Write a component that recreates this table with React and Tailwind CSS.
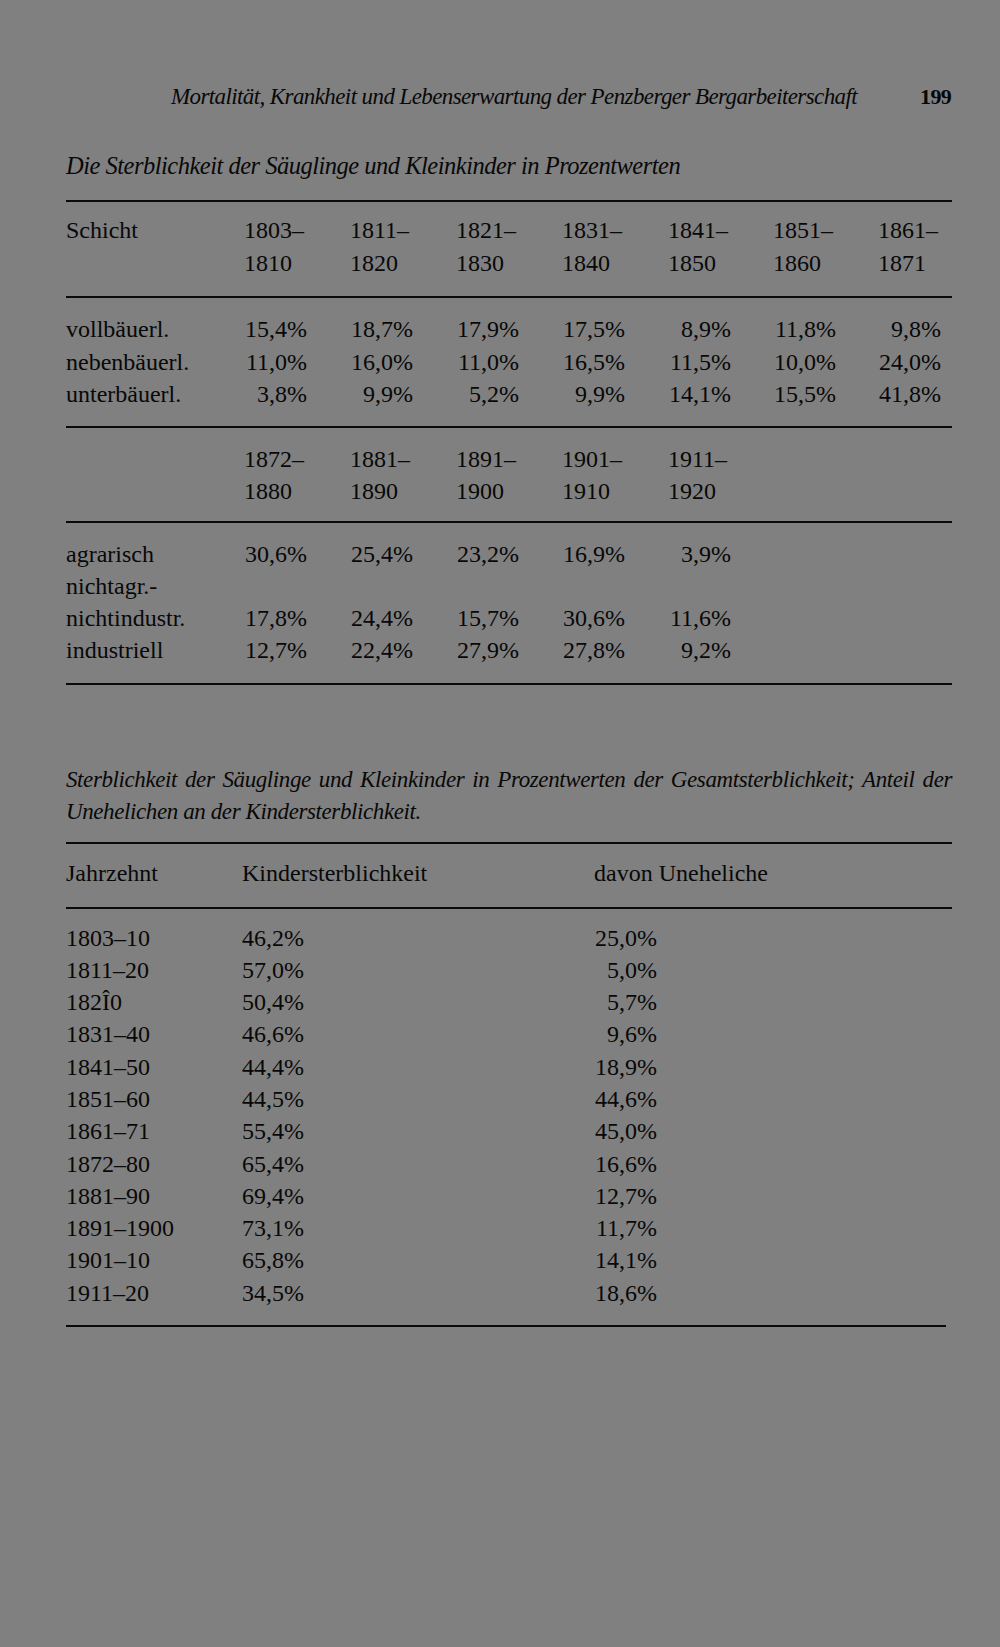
import React from "react";

const serif = { fontFamily: '"Liberation Serif", "DejaVu Serif", serif' };

const periods1 = [
  ["1803–", "1810"],
  ["1811–", "1820"],
  ["1821–", "1830"],
  ["1831–", "1840"],
  ["1841–", "1850"],
  ["1851–", "1860"],
  ["1861–", "1871"],
];

const rows1 = [
  ["vollbäuerl.", ["15,4%", "18,7%", "17,9%", "17,5%", "8,9%", "11,8%", "9,8%"]],
  ["nebenbäuerl.", ["11,0%", "16,0%", "11,0%", "16,5%", "11,5%", "10,0%", "24,0%"]],
  ["unterbäuerl.", ["3,8%", "9,9%", "5,2%", "9,9%", "14,1%", "15,5%", "41,8%"]],
];

const periods2 = [
  ["1872–", "1880"],
  ["1881–", "1890"],
  ["1891–", "1900"],
  ["1901–", "1910"],
  ["1911–", "1920"],
];

const rows2 = [
  ["agrarisch", ["30,6%", "25,4%", "23,2%", "16,9%", "3,9%"]],
  ["nichtagr.-", []],
  ["nichtindustr.", ["17,8%", "24,4%", "15,7%", "30,6%", "11,6%"]],
  ["industriell", ["12,7%", "22,4%", "27,9%", "27,8%", "9,2%"]],
];

const rows3 = [
  ["1803–10", "46,2%", "25,0%"],
  ["1811–20", "57,0%", "5,0%"],
  ["182Î0", "50,4%", "5,7%"],
  ["1831–40", "46,6%", "9,6%"],
  ["1841–50", "44,4%", "18,9%"],
  ["1851–60", "44,5%", "44,6%"],
  ["1861–71", "55,4%", "45,0%"],
  ["1872–80", "65,4%", "16,6%"],
  ["1881–90", "69,4%", "12,7%"],
  ["1891–1900", "73,1%", "11,7%"],
  ["1901–10", "65,8%", "14,1%"],
  ["1911–20", "34,5%", "18,6%"],
];

const Rule = ({ className = "" }) => (
  <div className={`h-[2px] bg-[#0a0a0a] ${className}`}></div>
);

const gridCols = "grid grid-cols-[178px_106px_106px_106px_106px_105px_105px_105px]";

const App = () => {
  return (
    <div
      className="w-[1000px] h-[1647px] bg-[#808080] text-[#080808] pt-[81px]"
      style={serif}
    >
      {/* running head */}
      <div className="flex items-center h-[32px] leading-[32px]">
        <div className="ml-[171px] w-[749px] italic text-[23px] tracking-[-0.6px]">
          Mortalität, Krankheit und Lebenserwartung der Penzberger Bergarbeiterschaft
        </div>
        <div className="text-[22px] font-bold tracking-[-0.6px]">199</div>
      </div>

      <div className="ml-[66px] w-[886px]">
        {/* first table */}
        <div className="mt-[37px] italic text-[24.5px] leading-[32px] tracking-[-0.5px]">
          Die Sterblichkeit der Säuglinge und Kleinkinder in Prozentwerten
        </div>
        <Rule className="mt-[18px]" />

        <div className={`${gridCols} mt-[12px] text-[24px] leading-[32.5px]`}>
          <div>Schicht</div>
          {periods1.map(([a, b]) => (
            <div key={a}>
              <div>{a}</div>
              <div>{b}</div>
            </div>
          ))}
        </div>
        <Rule className="mt-[17px]" />

        <div className="mt-[15px] text-[24px] leading-[32.5px]">
          {rows1.map(([label, vals]) => (
            <div key={label} className={gridCols}>
              <div>{label}</div>
              {vals.map((v, i) => (
                <div key={i} className="w-[63px] text-right">
                  {v}
                </div>
              ))}
            </div>
          ))}
        </div>
        <Rule className="mt-[15px]" />

        <div className={`${gridCols} mt-[15px] text-[24px] leading-[32px]`}>
          <div></div>
          {periods2.map(([a, b]) => (
            <div key={a}>
              <div>{a}</div>
              <div>{b}</div>
            </div>
          ))}
        </div>
        <Rule className="mt-[14px]" />

        <div className="mt-[15px] text-[24px] leading-[32px]">
          {rows2.map(([label, vals]) => (
            <div key={label} className={`${gridCols} h-[32px]`}>
              <div>{label}</div>
              {vals.map((v, i) => (
                <div key={i} className="w-[63px] text-right">
                  {v}
                </div>
              ))}
            </div>
          ))}
        </div>
        <Rule className="mt-[17px]" />

        {/* second table */}
        <div className="mt-[79px] italic text-[23px] leading-[32.5px] tracking-[-0.4px]">
          <div className="[text-align-last:justify]">
            Sterblichkeit der Säuglinge und Kleinkinder in Prozentwerten der Gesamtsterblichkeit; Anteil der
          </div>
          <div>Unehelichen an der Kindersterblichkeit.</div>
        </div>
        <Rule className="mt-[13px]" />

        <div className="grid grid-cols-[176px_352px_1fr] mt-[13px] text-[24px] leading-[32px]">
          <div>Jahrzehnt</div>
          <div>Kindersterblichkeit</div>
          <div>davon Uneheliche</div>
        </div>
        <Rule className="mt-[18px]" />

        <div className="mt-[13px] text-[24px] leading-[32.3px]">
          {rows3.map(([decade, total, illeg]) => (
            <div key={decade} className="grid grid-cols-[176px_352px_1fr]">
              <div>{decade}</div>
              <div>{total}</div>
              <div className="w-[63px] text-right">{illeg}</div>
            </div>
          ))}
        </div>
        <Rule className="mt-[16px] w-[880px]" />
      </div>
    </div>
  );
};

export default App;
